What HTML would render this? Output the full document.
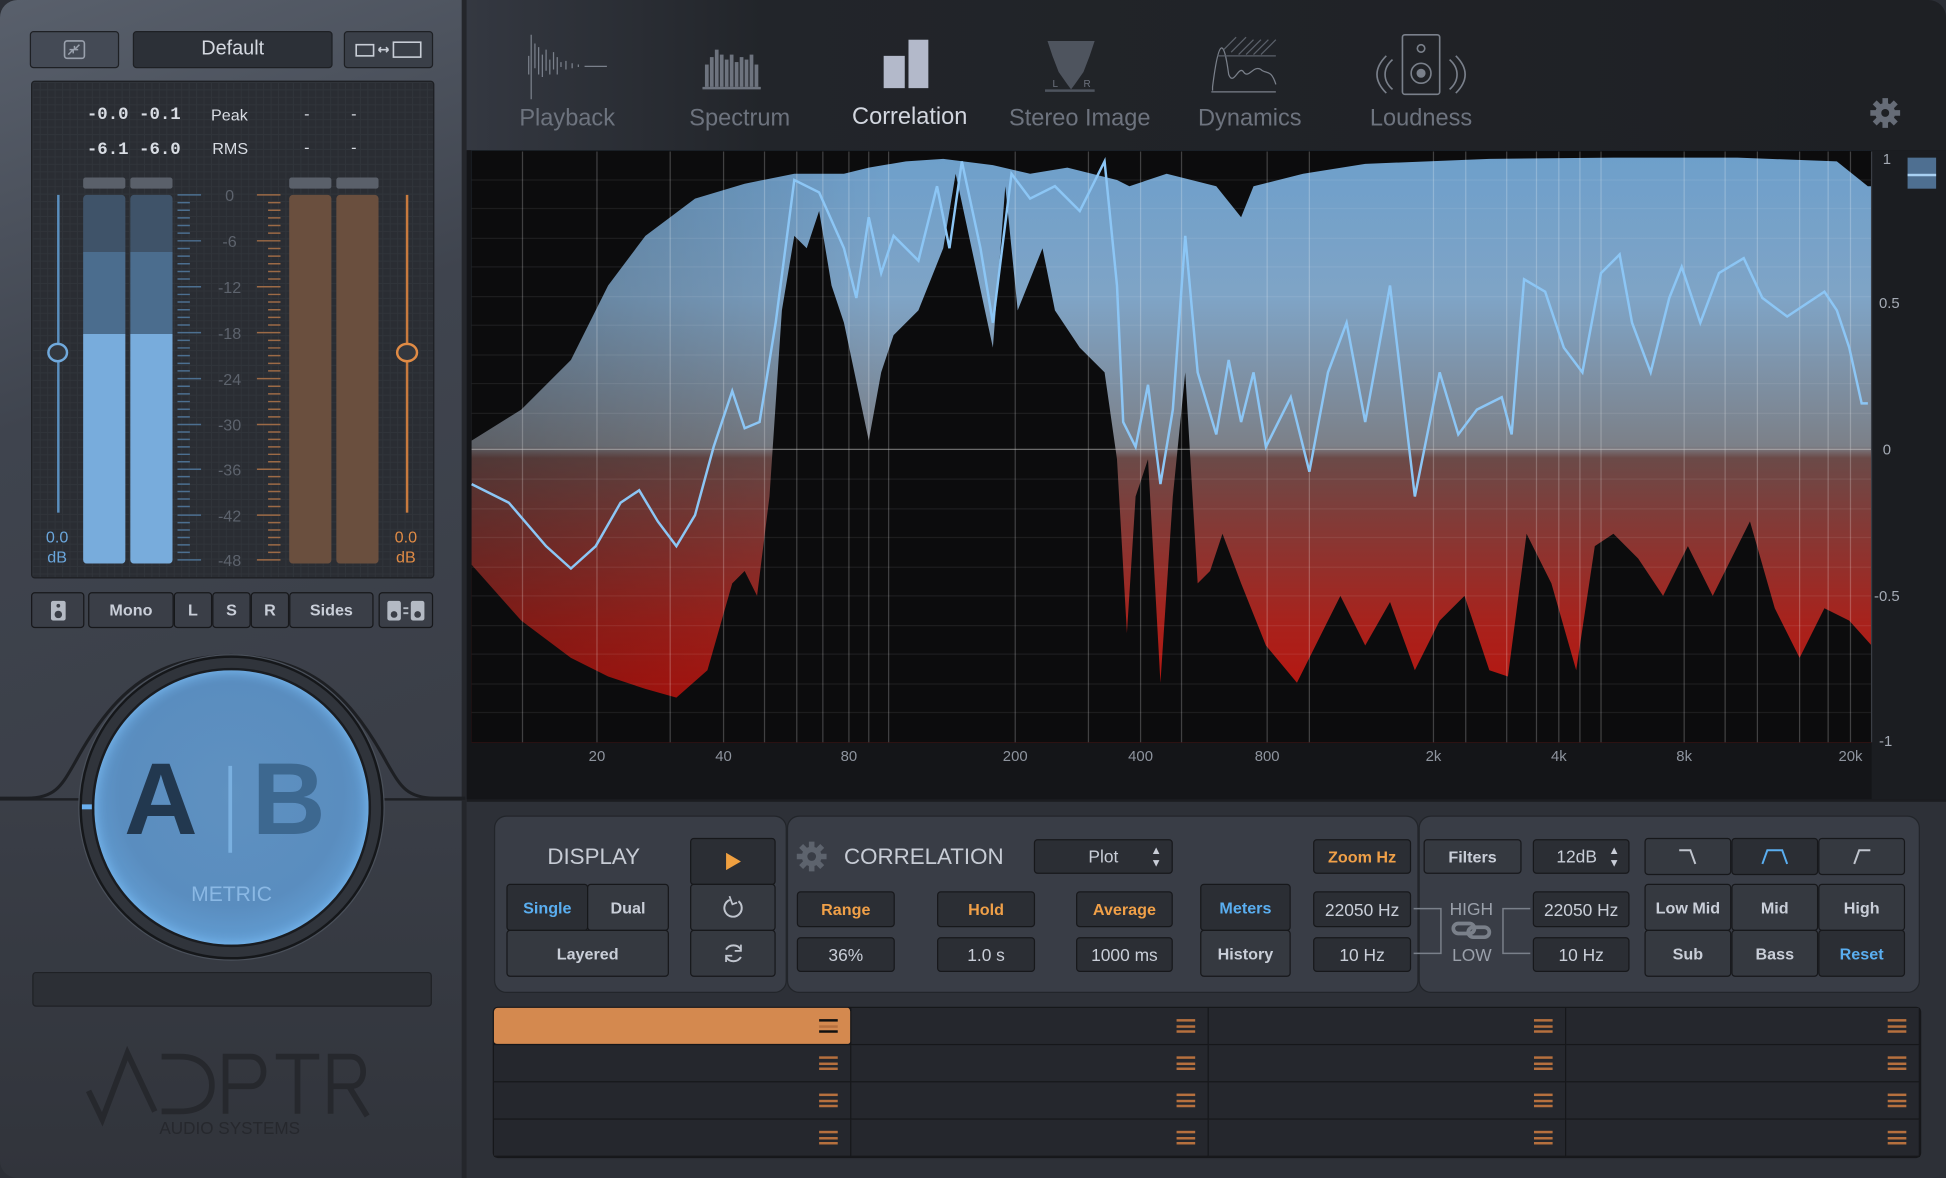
<!DOCTYPE html>
<html><head><meta charset="utf-8">
<style>
*{box-sizing:border-box;margin:0;padding:0}
html,body{width:1946px;height:1178px;overflow:hidden;background:#1a1b1e}
#s{position:absolute;left:0;top:0;width:1568px;height:949px;transform:scale(1.2411,1.2413);transform-origin:0 0;font-family:"Liberation Sans",sans-serif;background:#2c2f36}
.a{position:absolute}
.btn{position:absolute;background:#2b2e34;border:1px solid #17181b;border-radius:3px;color:#c9ced8;font-weight:bold;font-size:13px;display:flex;align-items:center;justify-content:center}
.t{position:absolute;white-space:nowrap}
.cell{position:absolute;background:#25272d;border-right:1px solid #16171a;border-bottom:1px solid #16171a}
.hb{position:absolute;right:10px;top:9px;width:15px;height:11px;border-top:2px solid #b6703e;border-bottom:2px solid #b6703e}
.hb:after{content:"";position:absolute;left:0;right:0;top:2.5px;height:2px;background:#b6703e}
</style></head><body>
<div id="s">
<div class="a" style="left:0;top:0;width:375px;height:643px;background:linear-gradient(160deg,#59606c,#3f444e 45%,#3a3e47);border-top-left-radius:14px"></div>
<div class="a" style="left:0;top:643px;width:375px;height:306px;background:linear-gradient(180deg,#3a3e47,#31343b);border-top:2px solid #1e2024;border-bottom-left-radius:14px"></div>
<div class="a" style="left:372px;top:0;width:4px;height:949px;background:#24262b"></div>
<div class="btn" style="left:24px;top:25px;width:72px;height:30px;background:#444a55;border-color:#1e2024"><svg width="18" height="16"><rect x="1" y="1" width="16" height="14" rx="2" fill="none" stroke="#9aa1ad" stroke-width="1.3"/><path d="M13 4 L9 8 M9 5 V8 H12 M4 12 L8 8 M5 8 H8 V11" stroke="#9aa1ad" stroke-width="1.2" fill="none"/></svg></div>
<div class="btn" style="left:107px;top:25px;width:161px;height:30px;background:#2c3037;border-color:#1e2024;font-weight:normal;font-size:16px;color:#d4d8e0">Default</div>
<div class="btn" style="left:277px;top:25px;width:72px;height:30px;background:#3a3f48;border-color:#1e2024"><svg width="54" height="14"><rect x="1" y="3" width="14" height="9" fill="none" stroke="#c8cdd6" stroke-width="1.3"/><path d="M19 7H27M19 7l2-2M19 7l2 2M27 7l-2-2M27 7l-2 2" stroke="#c8cdd6" stroke-width="1.3"/><rect x="31" y="1" width="22" height="12" fill="none" stroke="#c8cdd6" stroke-width="1.3"/></svg></div>
<div class="a" style="left:25px;top:65px;width:325px;height:401px;background:#2a2d33;border:1px solid #1d1f23;border-radius:3px;background-image:linear-gradient(#30343a 1px,transparent 1px),linear-gradient(90deg,#30343a 1px,transparent 1px);background-size:6px 6px"></div>
<div class="t" style="left:70px;top:85px;font-size:14px;color:#d8dce3;font-family:'Liberation Mono',monospace;font-weight:bold">-0.0 -0.1</div>
<div class="t" style="left:70px;top:113px;font-size:14px;color:#d8dce3;font-family:'Liberation Mono',monospace;font-weight:bold">-6.1 -6.0</div>
<div class="t" style="left:170px;top:85px;font-size:13px;color:#d8dce3">Peak</div>
<div class="t" style="left:171px;top:112px;font-size:13px;color:#d8dce3">RMS</div>
<div class="t" style="left:245px;top:84px;font-size:13px;color:#d8dce3;word-spacing:30px">- -</div>
<div class="t" style="left:245px;top:111px;font-size:13px;color:#d8dce3;word-spacing:30px">- -</div>
<div class="a" style="left:67px;top:143px;width:34px;height:9px;background:#5a606a;border-radius:2px"></div>
<div class="a" style="left:105px;top:143px;width:34px;height:9px;background:#5a606a;border-radius:2px"></div>
<div class="a" style="left:233px;top:143px;width:34px;height:9px;background:#5a606a;border-radius:2px"></div>
<div class="a" style="left:271px;top:143px;width:34px;height:9px;background:#5a606a;border-radius:2px"></div>
<div class="a" style="left:67px;top:157px;width:34px;height:297px;border-radius:3px;background:linear-gradient(#3f5369 0,#3f5369 46px,#4b6d8e 46px,#4b6d8e 112px,#78acdc 112px)"></div>
<div class="a" style="left:105px;top:157px;width:34px;height:297px;border-radius:3px;background:linear-gradient(#3f5369 0,#3f5369 46px,#4b6d8e 46px,#4b6d8e 112px,#78acdc 112px)"></div>
<div class="a" style="left:233px;top:157px;width:34px;height:297px;border-radius:3px;background:#6a4f3e"></div>
<div class="a" style="left:271px;top:157px;width:34px;height:297px;border-radius:3px;background:#6a4f3e"></div>
<svg class="a" style="left:140px;top:150px" width="95" height="310">
<g stroke="#4c6f90" stroke-width="1.2">
<path d="M3 7H22M3 44H22M3 81H22M3 118H22M3 155H22M3 192H22M3 228H22M3 265H22M3 301H22"/>
<path d="M3 13.2H13M3 19.4H13M3 25.5H13M3 31.7H13M3 37.8H13M3 50.2H13M3 56.3H13M3 62.5H13M3 68.7H13M3 74.8H13M3 87.2H13M3 93.3H13M3 99.5H13M3 105.7H13M3 111.8H13M3 124.2H13M3 130.3H13M3 136.5H13M3 142.7H13M3 148.8H13M3 161.2H13M3 167.3H13M3 173.5H13M3 179.7H13M3 185.8H13M3 198H13M3 204H13M3 210H13M3 216H13M3 222H13M3 234H13M3 240H13M3 246H13M3 252H13M3 258H13M3 271H13M3 277H13M3 283H13M3 289H13M3 295H13"/></g>
<g stroke="#9c6a46" stroke-width="1.2">
<path d="M67 7H86M67 44H86M67 81H86M67 118H86M67 155H86M67 192H86M67 228H86M67 265H86M67 301H86"/>
<path d="M76 13.2H86M76 19.4H86M76 25.5H86M76 31.7H86M76 37.8H86M76 50.2H86M76 56.3H86M76 62.5H86M76 68.7H86M76 74.8H86M76 87.2H86M76 93.3H86M76 99.5H86M76 105.7H86M76 111.8H86M76 124.2H86M76 130.3H86M76 136.5H86M76 142.7H86M76 148.8H86M76 161.2H86M76 167.3H86M76 173.5H86M76 179.7H86M76 185.8H86M76 198H86M76 204H86M76 210H86M76 216H86M76 222H86M76 234H86M76 240H86M76 246H86M76 252H86M76 258H86M76 271H86M76 277H86M76 283H86M76 289H86M76 295H86"/></g>
<g fill="#5d636d" font-size="13" text-anchor="middle" font-family="Liberation Sans">
<text x="45" y="12">0</text><text x="45" y="49">-6</text><text x="45" y="86">-12</text><text x="45" y="123">-18</text><text x="45" y="160">-24</text><text x="45" y="197">-30</text><text x="45" y="233">-36</text><text x="45" y="270">-42</text><text x="45" y="306">-48</text></g></svg>
<div class="a" style="left:46px;top:157px;width:2px;height:256px;background:#5a8fbf"></div>
<div class="a" style="left:38px;top:276px;width:17px;height:16px;border-radius:50%;border:2px solid #70a9dc;background:#33373e"></div>
<div class="a" style="left:327px;top:157px;width:2px;height:256px;background:#c87a3e"></div>
<div class="a" style="left:319px;top:276px;width:18px;height:16px;border-radius:50%;border:2px solid #e08b45;background:#33373e"></div>
<div class="t" style="left:37px;top:425px;font-size:13px;color:#6aa6dc;line-height:16px;text-align:center">0.0<br>dB</div>
<div class="t" style="left:318px;top:425px;font-size:13px;color:#e08b45;line-height:16px;text-align:center">0.0<br>dB</div>
<div class="btn" style="left:25px;top:477px;width:43px;height:29px;background:#3a3e47"><svg width="12" height="16"><rect x="0" y="0" width="12" height="16" rx="2" fill="#b4bac4"/><circle cx="6" cy="4" r="1.5" fill="#3a3e47"/><circle cx="6" cy="11" r="3" fill="#3a3e47"/></svg></div>
<div class="btn" style="left:71px;top:477px;width:69px;height:29px;background:#3a3e47">Mono</div>
<div class="btn" style="left:140px;top:477px;width:31px;height:29px;background:#3a3e47">L</div>
<div class="btn" style="left:171px;top:477px;width:31px;height:29px;background:#3a3e47">S</div>
<div class="btn" style="left:202px;top:477px;width:31px;height:29px;background:#3a3e47">R</div>
<div class="btn" style="left:233px;top:477px;width:68px;height:29px;background:#3a3e47">Sides</div>
<div class="btn" style="left:305px;top:477px;width:44px;height:29px;background:#3a3e47"><svg width="30" height="16"><rect x="0" y="0" width="11" height="16" rx="2" fill="#b4bac4"/><rect x="19" y="0" width="11" height="16" rx="2" fill="#b4bac4"/><circle cx="5.5" cy="11" r="2.7" fill="#3a3e47"/><circle cx="24.5" cy="11" r="2.7" fill="#3a3e47"/><path d="M13 6H17M13 10H17" stroke="#b4bac4" stroke-width="1.5"/></svg></div>
<svg class="a" style="left:0;top:510px" width="375" height="140"><path d="M0 133 H22 C45 133 50 122 60 105 C95 40 130 20 186 18 C242 20 277 40 312 105 C322 122 327 133 350 133 H375" fill="none" stroke="#1d1f23" stroke-width="2.5"/></svg>
<div class="a" style="left:64px;top:528px;width:245px;height:245px;border-radius:50%;background:#30343b;border:2px solid #15171a;box-shadow:0 0 0 1px #4a505a"></div>
<div class="a" style="left:74px;top:538px;width:225px;height:225px;border-radius:50%;border:2px solid #1a1c20;background:radial-gradient(circle at 50% 45%,#5f91c0 0,#5a8dbf 55%,#6aaee8 95%);box-shadow:inset 0 0 10px #7bbdf5"></div>
<div class="t" style="left:100px;top:600px;font-size:82px;font-weight:bold;color:#22384f;line-height:90px">A</div>
<div class="a" style="left:184px;top:617px;width:3px;height:70px;background:#7ab0e0"></div>
<div class="t" style="left:203px;top:600px;font-size:82px;font-weight:bold;color:#3d6890;line-height:90px">B</div>
<div class="t" style="left:154px;top:711px;font-size:17px;color:#8ab8e4">METRIC</div>
<div class="a" style="left:66px;top:648px;width:8px;height:4px;background:#6ab0f0"></div>
<div class="a" style="left:26px;top:783px;width:322px;height:28px;background:#2c2f35;border:1px solid #1f2125;border-radius:3px"></div>
<svg class="a" style="left:64px;top:842px" width="245" height="80"><g transform="scale(0.92)"><g fill="none" stroke="#26282d" stroke-width="5"><path d="M8 40 L20 65 L42 7 L66 58"/><path d="M72 10 H88 C110 10 116 25 116 35 C116 48 108 58 88 58 H72"/><path d="M128 60 V10 H150 C165 10 165 36 150 36 H128"/><path d="M172 10 H210 M191 10 V60"/><path d="M220 60 V10 H238 C252 10 252 36 238 36 H222 M236 36 L252 62"/></g><text x="70" y="78" font-size="15" fill="#26282d" font-family="Liberation Sans">AUDIO SYSTEMS</text></g></svg>
<div class="a" style="left:376px;top:0;width:1192px;height:121px;background:linear-gradient(90deg,#343841,#22252a 20%,#1e2024);border-top-right-radius:14px"></div>
<svg class="a" style="left:376px;top:0" width="1192" height="121">
<g stroke="#7a808b" fill="none" stroke-width="1"><path d="M52 28V80M50 60V45M55 55V35M58 60V38M61 62V44M64 57V40M67 60V48M70 56V42M73 60V46M76 54V50M80 56V49M85 55V51M90 54V52M95 53.5H113"/></g>
<g fill="#6d737e"><rect x="192" y="52" width="3" height="18"/><rect x="196" y="46" width="3" height="24"/><rect x="200" y="40" width="3" height="30"/><rect x="204" y="44" width="3" height="26"/><rect x="208" y="48" width="3" height="22"/><rect x="212" y="44" width="3" height="26"/><rect x="216" y="50" width="3" height="20"/><rect x="220" y="46" width="3" height="24"/><rect x="224" y="48" width="3" height="22"/><rect x="228" y="44" width="3" height="26"/><rect x="232" y="52" width="3" height="18"/><rect x="190" y="70" width="47" height="2"/></g>
<g fill="#b3b9ca"><rect x="336" y="45" width="17" height="26"/><rect x="356" y="32" width="16" height="39"/></g>
<g fill="#4e545e"><path d="M468 33H506L502 45L497 58L490 68L487 72L484 68L477 58L472 45Z"/><rect x="466" y="72" width="40" height="2"/></g>
<text x="472" y="70" font-size="8" fill="#6d737e">L</text><text x="497" y="70" font-size="8" fill="#6d737e">R</text>
<g stroke="#7a808b" fill="none"><path d="M601 73V70C606 30 610 30 614 60C618 70 622 52 626 58C630 64 634 52 640 56C644 60 648 55 652 68"/><path d="M600 74H652"/><path d="M610 40L620 30M616 42L628 30M622 44L634 32M628 44L640 32M634 44L646 32M640 44L652 32" stroke="#5a606a"/><path d="M605 45H652" stroke="#5a606a"/></g>
<g stroke="#7a808b" fill="none" stroke-width="1.3"><rect x="754" y="28" width="30" height="48" rx="2"/><circle cx="769" cy="39" r="3"/><circle cx="769" cy="59" r="8"/><circle cx="769" cy="59" r="3" fill="#7a808b"/><path d="M746 48C738 55 738 65 746 72M741 45C731 55 731 65 741 75M792 48C800 55 800 65 792 72M797 45C807 55 807 65 797 75"/></g>
<g font-size="19" text-anchor="middle" font-family="Liberation Sans" fill="#6d737e"><text x="81" y="101">Playback</text><text x="220" y="101">Spectrum</text><text x="357" y="100" fill="#d2d6df">Correlation</text><text x="494" y="101">Stereo Image</text><text x="631" y="101">Dynamics</text><text x="769" y="101">Loudness</text></g>
<g transform="translate(1143,91)" fill="#666c77"><circle r="8"/><g stroke="#666c77" stroke-width="4.5"><path d="M0 -12V12M-12 0H12M-8.5 -8.5L8.5 8.5M-8.5 8.5L8.5 -8.5"/></g><circle r="3.2" fill="#1e2024"/></g>
</svg>
<div class="a" style="left:376px;top:121px;width:1192px;height:523px;background:#141518"></div>
<svg class="a" style="left:376px;top:121px" width="1192" height="523">
<defs><linearGradient id="g" x1="0" y1="0" x2="0" y2="1"><stop offset="0" stop-color="#6d9fcb"/><stop offset="0.25" stop-color="#7fa4c6"/><stop offset="0.5" stop-color="#7c8088"/><stop offset="0.52" stop-color="#6b4a48"/><stop offset="0.8" stop-color="#a8221c"/><stop offset="1" stop-color="#c00d08"/></linearGradient>
<linearGradient id="gl" x1="0" y1="0" x2="1" y2="0"><stop offset="0" stop-color="#000" stop-opacity="0.25"/><stop offset="0.3" stop-color="#000" stop-opacity="0"/></linearGradient></defs>
<rect x="4" y="0" width="1128" height="477" fill="url(#g)"/>
<rect x="4" y="0" width="1128" height="477" fill="url(#gl)"/>
<g transform="translate(-376,-121)">
<path fill="#0c0c0d" d="M380 121 H1508 V150 L1505 150 L1480 130 L1400 127 L1300 127 L1200 128 L1100 132 L1050 140 L1010 150 L1000 175 L980 150 L940 140 L910 150 L900 145 L860 135 L830 140 L800 133 L760 128 L730 130 L700 135 L680 140 L640 140 L600 148 L560 160 L520 190 L490 230 L460 290 L420 330 L380 355 Z"/>
<path fill="#0c0c0d" d="M380 455 L420 500 L460 530 L490 545 L520 555 L545 562 L570 540 L590 470 L600 460 L610 480 L620 400 L630 250 L640 190 L650 200 L660 170 L670 230 L680 260 L700 355 L710 300 L720 270 L740 250 L760 200 L770 140 L785 210 L800 280 L810 150 L820 250 L840 200 L850 250 L870 280 L890 300 L900 370 L908 510 L915 400 L925 370 L935 550 L945 400 L955 300 L965 470 L975 460 L985 430 L1000 470 L1020 520 L1045 550 L1060 520 L1080 480 L1100 520 L1120 485 L1140 540 L1160 500 L1180 480 L1200 540 L1215 545 L1230 430 L1250 470 L1270 540 L1285 440 L1300 430 L1320 450 L1340 480 L1360 440 L1380 480 L1410 420 L1430 490 L1450 530 L1470 490 L1490 500 L1508 520 V598 H380 Z"/>
<g stroke="#ffffff" stroke-opacity="0.22" stroke-width="1"><path d="M481 122V598M583 122V598M642 122V598M684 122V598M716 122V598M818 122V598M877 122V598M919 122V598M952 122V598M1021 122V598M1055 122V598M1155 122V598M1214 122V598M1256 122V598M1290 122V598M1357 122V598M1390 122V598M1491 122V598M421 122V598M540 122V598M616 122V598M663 122V598M700 122V598M1181 122V598M1238 122V598M1273 122V598M1416 122V598M1450 122V598M1473 122V598"/></g>
<g stroke="#ffffff" stroke-opacity="0.07"><path d="M380 145H1508M380 168H1508M380 192H1508M380 215H1508M380 239H1508M380 262H1508M380 286H1508M380 309H1508M380 333H1508M380 386H1508M380 410H1508M380 433H1508M380 457H1508M380 480H1508M380 504H1508M380 527H1508M380 551H1508M380 574H1508"/></g>
<path d="M380 362H1508" stroke="#c8c8c8" stroke-opacity="0.5"/>
<polyline fill="none" stroke="#8cc6f5" stroke-width="2" points="380,390 410,405 440,440 460,458 480,440 500,405 515,395 530,420 545,440 560,415 575,360 590,315 600,345 612,340 625,260 640,145 660,155 680,200 690,240 700,175 710,220 720,190 740,210 755,150 765,200 775,130 790,200 800,260 815,140 830,160 850,150 870,170 890,130 900,230 905,340 915,360 925,310 935,390 945,330 955,190 965,300 980,350 990,290 1000,340 1010,300 1020,360 1040,320 1055,380 1070,300 1085,260 1100,340 1120,230 1140,400 1160,300 1175,350 1190,330 1210,320 1218,350 1228,225 1245,235 1260,280 1275,300 1290,220 1305,205 1315,260 1330,300 1345,240 1355,215 1370,260 1385,220 1405,208 1420,240 1440,255 1455,245 1470,235 1480,250 1490,280 1500,325 1505,325"/>
<rect x="1508" y="121" width="60" height="523" fill="#1b1d21"/>
<path d="M1508 122V598" stroke="#3a3e45"/>
<rect x="1537" y="127" width="23" height="25" fill="#4e6f91"/><rect x="1537" y="140" width="23" height="2" fill="#a8d0f2"/>
<g fill="#a4aab4" font-size="12" font-family="Liberation Sans"><text x="1517" y="132">1</text><text x="1514" y="248">0.5</text><text x="1517" y="366">0</text><text x="1510" y="484">-0.5</text><text x="1514" y="601">-1</text></g>
<g fill="#8e949e" font-size="12" font-family="Liberation Sans" text-anchor="middle"><text x="481" y="613">20</text><text x="583" y="613">40</text><text x="684" y="613">80</text><text x="818" y="613">200</text><text x="919" y="613">400</text><text x="1021" y="613">800</text><text x="1155" y="613">2k</text><text x="1256" y="613">4k</text><text x="1357" y="613">8k</text><text x="1491" y="613">20k</text></g>
</g></svg>
<div class="a" style="left:376px;top:644px;width:1192px;height:305px;background:#2d3037;border-top:2px solid #1b1c20;border-bottom-right-radius:12px"></div>
<div class="a" style="left:398px;top:657px;width:236px;height:143px;background:#393d46;border:1px solid #22252a;border-radius:10px"></div>
<div class="a" style="left:634px;top:657px;width:509px;height:143px;background:#393d46;border:1px solid #22252a;border-radius:10px"></div>
<div class="a" style="left:1143px;top:657px;width:404px;height:143px;background:#393d46;border:1px solid #22252a;border-radius:10px"></div>
<div class="t" style="left:441px;top:680px;font-size:18px;color:#c7ccd5">DISPLAY</div>
<div class="btn" style="left:408px;top:712px;width:66px;height:38px;color:#5aaef0">Single</div>
<div class="btn" style="left:473px;top:712px;width:66px;height:38px;background:#353940">Dual</div>
<div class="btn" style="left:408px;top:749px;width:131px;height:38px;background:#353940">Layered</div>
<div class="btn" style="left:556px;top:675px;width:69px;height:38px"><svg width="12" height="14"><path d="M0 0L12 7L0 14Z" fill="#f0a040"/></svg></div>
<div class="btn" style="left:556px;top:712px;width:69px;height:38px;background:#353940"><svg width="18" height="20"><path d="M13 5A7 7 0 1 1 6 4" fill="none" stroke="#c0c5ce" stroke-width="1.6"/><path d="M7 0V7H11" fill="none" stroke="#c0c5ce" stroke-width="1.4" transform="rotate(-20 9 4)"/></svg></div>
<div class="btn" style="left:556px;top:749px;width:69px;height:38px;background:#353940"><svg width="20" height="20"><path d="M4 7A7 7 0 0 1 16 7M16 13A7 7 0 0 1 4 13" fill="none" stroke="#c0c5ce" stroke-width="1.6"/><path d="M16 3V8H11M4 17V12H9" fill="none" stroke="#c0c5ce" stroke-width="1.4"/></svg></div>
<svg class="a" style="left:641px;top:677px" width="26" height="26"><g transform="translate(13,13)" fill="#5d636d"><circle r="8"/><g stroke="#5d636d" stroke-width="4.5"><path d="M0 -12V12M-12 0H12M-8.5 -8.5L8.5 8.5M-8.5 8.5L8.5 -8.5"/></g><circle r="3.5" fill="#393d46"/></g></svg>
<div class="t" style="left:680px;top:680px;font-size:18px;color:#c7ccd5">CORRELATION</div>
<div class="btn" style="left:833px;top:676px;width:112px;height:28px;font-weight:normal;font-size:14px;color:#c9ced8">Plot<span style="position:absolute;right:8px;top:3px;font-size:9px;line-height:10px">▲<br>▼</span></div>
<div class="btn" style="left:642px;top:718px;width:79px;height:29px;color:#f0a048">Range</div>
<div class="btn" style="left:642px;top:755px;width:79px;height:28px;font-weight:normal;font-size:14px">36%</div>
<div class="btn" style="left:755px;top:718px;width:79px;height:29px;color:#f0a048">Hold</div>
<div class="btn" style="left:755px;top:755px;width:79px;height:28px;font-weight:normal;font-size:14px">1.0 s</div>
<div class="btn" style="left:867px;top:718px;width:78px;height:29px;color:#f0a048">Average</div>
<div class="btn" style="left:867px;top:755px;width:78px;height:28px;font-weight:normal;font-size:14px">1000 ms</div>
<div class="btn" style="left:967px;top:712px;width:73px;height:38px;color:#5aaef0">Meters</div>
<div class="btn" style="left:967px;top:749px;width:73px;height:38px;background:#353940">History</div>
<div class="btn" style="left:1058px;top:676px;width:79px;height:28px;color:#f0a048">Zoom Hz</div>
<div class="btn" style="left:1058px;top:718px;width:79px;height:29px;font-weight:normal;font-size:14px">22050 Hz</div>
<div class="btn" style="left:1058px;top:755px;width:79px;height:28px;font-weight:normal;font-size:14px">10 Hz</div>
<svg class="a" style="left:1137px;top:722px" width="98" height="56"><g stroke="#7a808a" fill="none" stroke-width="1.2"><path d="M2 10H24V46H2M96 10H74V46H96"/></g><g stroke="#7a808a" fill="none" stroke-width="3"><rect x="34" y="22" width="17" height="8" rx="4"/><rect x="46" y="25" width="17" height="8" rx="4"/></g></svg>
<div class="t" style="left:1168px;top:724px;font-size:14px;color:#9aa0aa">HIGH</div>
<div class="t" style="left:1170px;top:761px;font-size:14px;color:#9aa0aa">LOW</div>
<div class="btn" style="left:1147px;top:676px;width:79px;height:28px;background:#353940">Filters</div>
<div class="btn" style="left:1235px;top:676px;width:78px;height:28px;font-weight:normal;font-size:14px;justify-content:flex-start;padding-left:18px">12dB<span style="position:absolute;right:7px;top:3px;font-size:9px;line-height:10px">▲<br>▼</span></div>
<div class="btn" style="left:1235px;top:718px;width:78px;height:29px;font-weight:normal;font-size:14px">22050 Hz</div>
<div class="btn" style="left:1235px;top:755px;width:78px;height:28px;font-weight:normal;font-size:14px">10 Hz</div>
<div class="btn" style="left:1325px;top:675px;width:70px;height:30px;background:#353940"><svg width="16" height="14"><path d="M1 2H10L14 13" fill="none" stroke="#c0c5ce" stroke-width="1.6"/></svg></div>
<div class="btn" style="left:1395px;top:675px;width:70px;height:30px"><svg width="22" height="14"><path d="M1 13L5 2H17L21 13" fill="none" stroke="#5aaef0" stroke-width="1.6"/></svg></div>
<div class="btn" style="left:1465px;top:675px;width:70px;height:30px;background:#353940"><svg width="16" height="14"><path d="M2 13L6 2H15" fill="none" stroke="#c0c5ce" stroke-width="1.6"/></svg></div>
<div class="btn" style="left:1325px;top:712px;width:70px;height:38px;background:#353940">Low Mid</div>
<div class="btn" style="left:1395px;top:712px;width:70px;height:38px;background:#353940">Mid</div>
<div class="btn" style="left:1465px;top:712px;width:70px;height:38px;background:#353940">High</div>
<div class="btn" style="left:1325px;top:749px;width:70px;height:38px;background:#353940">Sub</div>
<div class="btn" style="left:1395px;top:749px;width:70px;height:38px;background:#353940">Bass</div>
<div class="btn" style="left:1465px;top:749px;width:70px;height:38px;color:#5aaef0">Reset</div>
<div class="a" style="left:397px;top:811px;width:1151px;height:122px;background:#16171a;border:1px solid #16171a;border-radius:4px"></div>
<div class="cell" style="left:398px;top:812px;width:288px;height:30px;background:#d4894f;border-radius:3px"><div class="hb" style="border-color:#111;"></div></div>
<div class="cell" style="left:686px;top:812px;width:288px;height:30px"><div class="hb"></div></div>
<div class="cell" style="left:974px;top:812px;width:288px;height:30px"><div class="hb"></div></div>
<div class="cell" style="left:1262px;top:812px;width:285px;height:30px"><div class="hb"></div></div>
<div class="cell" style="left:398px;top:842px;width:288px;height:30px"><div class="hb"></div></div>
<div class="cell" style="left:686px;top:842px;width:288px;height:30px"><div class="hb"></div></div>
<div class="cell" style="left:974px;top:842px;width:288px;height:30px"><div class="hb"></div></div>
<div class="cell" style="left:1262px;top:842px;width:285px;height:30px"><div class="hb"></div></div>
<div class="cell" style="left:398px;top:872px;width:288px;height:30px"><div class="hb"></div></div>
<div class="cell" style="left:686px;top:872px;width:288px;height:30px"><div class="hb"></div></div>
<div class="cell" style="left:974px;top:872px;width:288px;height:30px"><div class="hb"></div></div>
<div class="cell" style="left:1262px;top:872px;width:285px;height:30px"><div class="hb"></div></div>
<div class="cell" style="left:398px;top:902px;width:288px;height:30px"><div class="hb"></div></div>
<div class="cell" style="left:686px;top:902px;width:288px;height:30px"><div class="hb"></div></div>
<div class="cell" style="left:974px;top:902px;width:288px;height:30px"><div class="hb"></div></div>
<div class="cell" style="left:1262px;top:902px;width:285px;height:30px"><div class="hb"></div></div>
</div>
</body></html>
